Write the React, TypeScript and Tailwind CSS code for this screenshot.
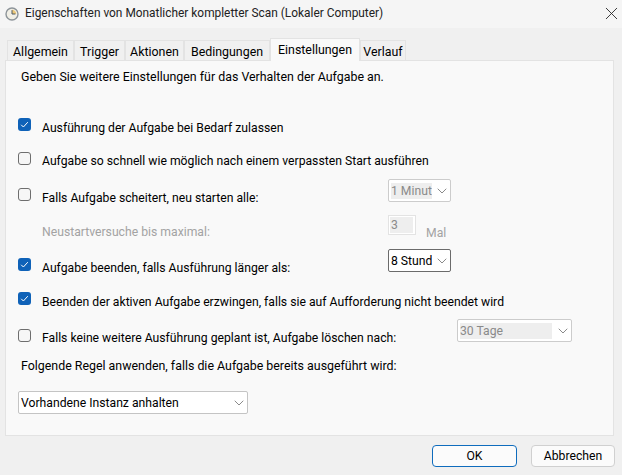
import { ChevronDown, X } from 'lucide-react';

const tabs = [
  { label: 'Allgemein', width: 'w-[67px]' },
  { label: 'Trigger', width: 'w-[51px]' },
  { label: 'Aktionen', width: 'w-[59px]' },
  { label: 'Bedingungen', width: 'w-[86px]' },
  { label: 'Einstellungen', width: 'w-[90px]', active: true },
  { label: 'Verlauf', width: 'w-[46px]' },
];

function Check({ checked }: { checked?: boolean }) {
  if (checked) {
    return (
      <span className="flex h-[13px] w-[13px] shrink-0 items-center justify-center rounded-[3px] bg-[#0f62b8]">
        <svg viewBox="0 0 13 13" className="h-[13px] w-[13px]" fill="none">
          <path d="M3.2 6.8 5.4 9l4.4-4.8" stroke="#ffffff" strokeWidth="1" />
        </svg>
      </span>
    );
  }
  return <span className="h-[13px] w-[13px] shrink-0 rounded-[3px] border border-[#6e6e6e] bg-[#f6f6f6]" />;
}

function Select({
  text,
  fill,
  disabled,
  className,
}: {
  text: string;
  fill: string;
  disabled?: boolean;
  className: string;
}) {
  return (
    <div
      className={`flex h-[23px] shrink-0 items-center rounded-[2px] border bg-white pl-[2px] ${
        disabled ? 'border-[#cccccc] text-[#8a8a8a]' : 'border-[#6b6b6b] text-black'
      } ${className}`}
    >
      <span className={`h-[16px] overflow-hidden whitespace-nowrap leading-[16px] ${disabled ? 'bg-[#eeeeee]' : ''} ${fill}`}>
        {text}
      </span>
      <ChevronDown className="ml-auto text-[#777777]" size={16} strokeWidth={1.3} />
    </div>
  );
}

export default function App() {
  return (
    <div className="flex h-[475px] w-[622px] flex-col overflow-hidden bg-[#f0f0f0] font-['Roboto','Noto_Sans',sans-serif] text-[12.2px] text-black">
      <div className="flex h-[28px] shrink-0 items-center bg-[#f5f5f5] pl-[5px]">
        <svg viewBox="0 0 14 14" className="mb-px h-[14px] w-[14px]" fill="none">
          <circle cx="7" cy="7" r="6" fill="#f1efe6" stroke="#8d9499" strokeWidth="1.4" />
          <path d="M7 2.8v4.2h4.2A4.2 4.2 0 0 0 7 2.8Z" fill="#ecc878" />
          <path d="M7 3.2V7h3.4" stroke="#4f5a64" strokeWidth="1" />
        </svg>
        <span className="ml-[6px] text-[11.9px] text-[#222222]">Eigenschaften von Monatlicher kompletter Scan (Lokaler Computer)</span>
        <X className="mb-[2px] ml-auto text-[#222222]" size={21} strokeWidth={1} />
      </div>

      <div className="mt-[10px] flex h-[22px] shrink-0 items-end pl-[7px] text-[12.4px]">
        {tabs.map((tab) => (
          <div
            key={tab.label}
            className={`relative flex items-center justify-center border border-[#e3e3e3] ${tab.width} ${
              tab.active
                ? 'z-10 -mb-px h-[23px] border-b-0 bg-[#f9f9f9] pt-px'
                : 'h-[20px] border-b-0 bg-[#f0f0f0] pt-[3px]'
            }`}
          >
            {tab.label}
          </div>
        ))}
      </div>

      <div className="ml-[5px] mr-[8px] flex h-[376px] shrink-0 flex-col border border-[#e3e3e3] bg-[#f9f9f9] pl-[12px]">
        <p className="ml-[3px] mt-[7px] h-[18px] text-[12.4px] leading-[18px]">Geben Sie weitere Einstellungen für das Verhalten der Aufgabe an.</p>

        <div className="mt-[32px] flex h-[18px] items-start">
          <Check checked />
          <span className="ml-[11px] mt-px leading-[18px]">Ausführung der Aufgabe bei Bedarf zulassen</span>
        </div>
        <div className="mt-[16px] flex h-[18px] items-start">
          <Check />
          <span className="ml-[11px] leading-[18px]">Aufgabe so schnell wie möglich nach einem verpassten Start ausführen</span>
        </div>
        <div className="mt-[9px] flex h-[23px] items-start">
          <div className="mt-[9px] flex w-[370px] items-start">
            <Check />
            <span className="ml-[11px] mt-px leading-[18px]">Falls Aufgabe scheitert, neu starten alle:</span>
          </div>
          <Select text="1 Minut" fill="w-[41px]" disabled className="w-[63px]" />
        </div>
        <div className="mt-[13px] flex h-[20px] items-start">
          <span className="ml-[24px] mt-[8px] w-[346px] leading-[18px] text-[#a3a3a3]">Neustartversuche bis maximal:</span>
          <div className="flex h-[20px] w-[28px] items-center border border-[#e3e3e3] bg-white pl-[1px] text-[#8a8a8a]">
            <span className="h-[16px] w-[23px] bg-[#eeeeee] pl-[1px] leading-[16px]">3</span>
          </div>
          <span className="ml-[10px] mt-[9px] leading-[18px] text-[#a3a3a3]">Mal</span>
        </div>
        <div className="mt-[14px] flex h-[22px] items-start">
          <div className="mt-[9px] flex w-[370px] items-start">
            <Check checked />
            <span className="ml-[11px] mt-px leading-[18px]">Aufgabe beenden, falls Ausführung länger als:</span>
          </div>
          <Select text="8 Stund" fill="w-[41px]" className="h-[22px] w-[63px]" />
        </div>
        <div className="mt-[21px] flex h-[18px] items-start">
          <Check checked />
          <span className="ml-[11px] mt-px leading-[18px]">Beenden der aktiven Aufgabe erzwingen, falls sie auf Aufforderung nicht beendet wird</span>
        </div>
        <div className="mt-[9px] flex h-[23px] items-start">
          <div className="mt-[10px] flex w-[439px] items-start">
            <Check />
            <span className="ml-[11px] leading-[18px]">Falls keine weitere Ausführung geplant ist, Aufgabe löschen nach:</span>
          </div>
          <Select text="30 Tage" fill="w-[92px]" disabled className="w-[115px]" />
        </div>
        <p className="ml-[3px] mt-[15px] h-[18px] text-[12.4px] leading-[18px]">Folgende Regel anwenden, falls die Aufgabe bereits ausgeführt wird:</p>
        <Select text="Vorhandene Instanz anhalten" fill="" className="mt-[16px] w-[230px] border-[#c4c4c4]" />
      </div>

      <div className="mt-[9px] flex justify-end gap-[14px] pr-[7px]">
        <button className="h-[22px] w-[85px] rounded-[4px] border border-[#0f6cbd] bg-[#fbfbfb]">OK</button>
        <button className="h-[22px] w-[84px] rounded-[4px] border border-[#d0d0d0] bg-[#fbfbfb]">Abbrechen</button>
      </div>
    </div>
  );
}
